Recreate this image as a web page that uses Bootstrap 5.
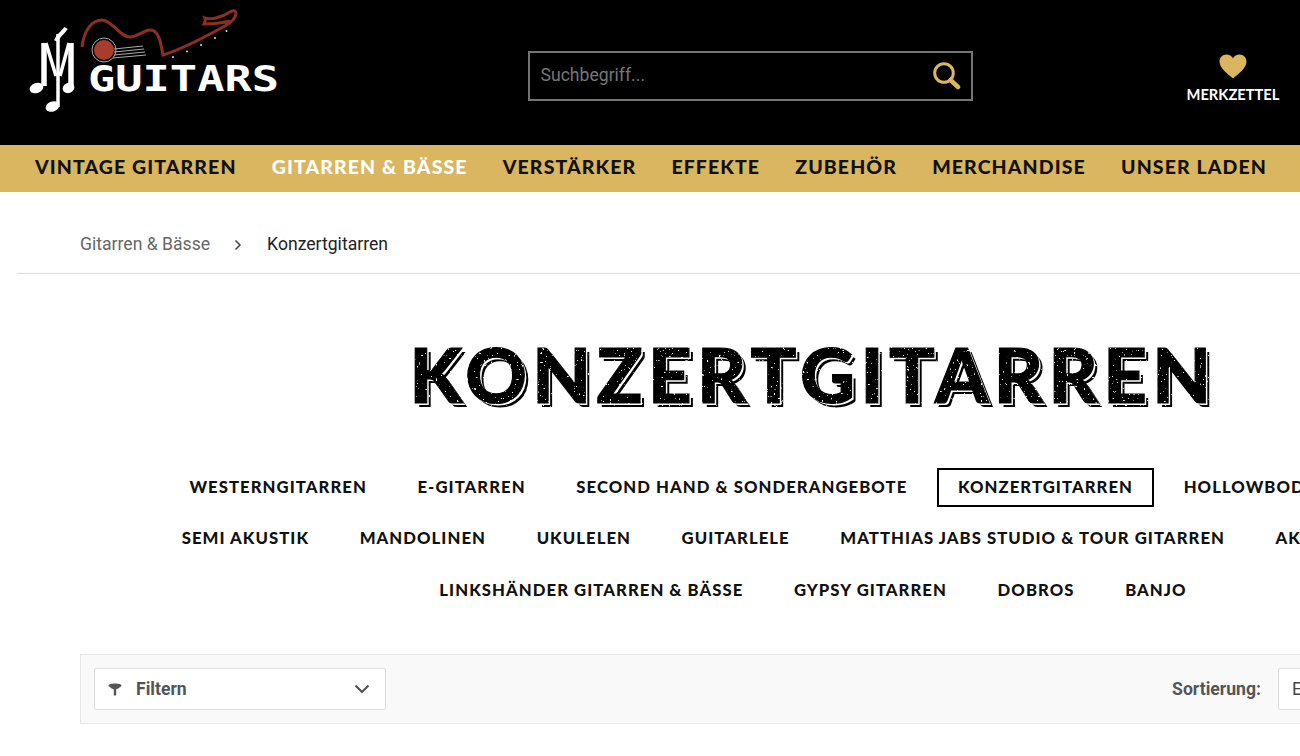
<!DOCTYPE html>
<html lang="de">
<head>
<meta charset="utf-8">
<title>Konzertgitarren</title>
<link rel="stylesheet" href="https://cdn.jsdelivr.net/npm/bootstrap@5.3.0/dist/css/bootstrap.min.css">
<style>
html,body{overflow:hidden;height:756px;width:1300px}
body{font-family:Roboto,sans-serif;background:#fff;color:#222}
.site-top{background:#000;height:145px;padding:0 20px 0 29px}
.logo-svg{display:block;width:252px;height:112px}
.logo-word{font-family:"DejaVu Sans Mono",monospace;font-weight:700;font-size:36px;fill:#fff}
.search-wrap{width:445px;height:50px;border:2.5px solid #747474;margin-left:247px;margin-top:6px;padding:0 10px 0 8.5px}
.search-wrap input{background:transparent;border:0;outline:0;color:#fff;font-size:17.6px;width:100%;font-family:Roboto,sans-serif}
.search-wrap input::placeholder{color:#777;opacity:1}
.wish{width:94px;color:#fff;font-family:Lato,sans-serif;font-weight:700;font-size:14.7px;margin-left:auto;margin-top:14px}
.wish svg{display:block;margin-bottom:4px}
.gold-bar{background:#d9b65f;height:46.500px;padding:0 33px 3px 35px}
.gold-bar a{font-family:Lato,sans-serif;font-weight:900;font-size:19.5px;letter-spacing:1.1px;color:#111;text-decoration:none;white-space:nowrap}
.gold-bar a.is-on{color:#fff}
.wide-page{width:1626px}
.crumbs{margin-left:17px;height:82px;padding:25px 0 0 63px;border-bottom:1px solid #ddd;font-size:17.6px}
.crumbs a{color:#666;text-decoration:none}
.crumbs svg{margin:0 25px 0 24px}
.big-title{font-family:Lato,sans-serif;font-weight:900;font-size:76px;letter-spacing:5.4px;line-height:1;color:#000;margin:62px 0 0;-webkit-text-stroke:1.2px #000;text-shadow:2px 2px 0 #fff,4px 4px 0 #000;filter:url(#worn)}
.cat-rows{margin-top:50px}
.cat-line{height:51.5px}
.cat-line a{font-family:Lato,sans-serif;font-weight:900;font-size:16.7px;letter-spacing:1.05px;color:#111;text-decoration:none;white-space:nowrap;padding:7px 19px;border:2px solid transparent;margin:0 4.3px;line-height:21px}
.cat-line a.is-on{border-color:#000}
.tool-strip{margin:38px 0 0 80px;width:1466px;height:70px;background:#f9f9f9;border:1px solid #e6e6e6;padding:0 13px}
.filter-box{width:292px;height:42px;background:#fff;border:1px solid #ddd;border-radius:2px;padding:0 15px 0 13px;color:#555;font-weight:700;font-size:17.6px}
.filter-box .funnel{margin-right:14px}
.sort-label{color:#555;font-weight:700;font-size:17.6px;margin-right:17px}
.sort-box{width:254px;height:42px;background:#fff;border:1px solid #ddd;border-radius:2px;padding:0 13px;color:#444;font-size:17.6px}
</style>
</head>
<body>
<svg width="0" height="0" class="position-absolute"><defs>
<filter id="worn" x="-2%" y="-10%" width="104%" height="120%">
<feTurbulence type="fractalNoise" baseFrequency="0.42" numOctaves="3" seed="11" result="n"/>
<feColorMatrix in="n" type="matrix" values="0 0 0 0 1  0 0 0 0 1  0 0 0 0 1  0 0 0 12 -8.6" result="spk"/>
<feComposite in="spk" in2="SourceAlpha" operator="in" result="specks"/>
<feMerge><feMergeNode in="SourceGraphic"/><feMergeNode in="specks"/></feMerge>
</filter>
</defs></svg>

<header class="site-top d-flex align-items-center">
  <a href="#" class="d-block align-self-start" aria-label="MJ Guitars">
    <svg class="logo-svg" viewBox="29 0 252 112">
      <g fill="none" stroke="#fff" stroke-linecap="butt">
        <path d="M44 86V43" stroke-width="5.500"/>
        <path d="M46 43L56 76" stroke-width="3.500"/>
        <path d="M71 87V43" stroke-width="5.500"/>
        <path d="M69 43L60 76" stroke-width="3.500"/>
        <path d="M58 107V34" stroke-width="3.500"/>
        <path d="M56 41C58 35 63 33 66 28" stroke-width="4"/>
      </g>
      <g fill="#fff">
        <ellipse cx="36.500" cy="88" rx="7" ry="5" transform="rotate(-20 36.500 88)"/>
        <ellipse cx="52.500" cy="106.500" rx="7" ry="5" transform="rotate(-20 52.500 106.500)"/>
        <ellipse cx="68.500" cy="88" rx="6" ry="5" transform="rotate(-20 68.500 88)"/>
      </g>
      <path d="M82 47C84 30 92 20 102 20C113 21 120 37 130 37C140 36 147 27 154 31C160 35 161 45 163 55C180 50 205 37 225 26C232 22 236 18 236 13C235 9 232 11 228 13C222 17 212 20 205 18C206 20 205 22 204 24C214 24 222 23 230 21" fill="none" stroke="#8c2f22" stroke-width="3"/>
      <circle cx="104" cy="50" r="12" fill="none" stroke="#aaa" stroke-width="1"/>
      <circle cx="104" cy="50" r="10" fill="#a93d2c"/>
      <g stroke="#aaa" stroke-width="1" fill="none">
        <path d="M114 49L143 46"/><path d="M114 52L144 49"/><path d="M114 55L145 52"/><path d="M113 58L146 55"/>
      </g>
      <g fill="#ddd"><circle cx="173" cy="57" r="1"/><circle cx="187" cy="51.500" r="1"/><circle cx="201" cy="45" r="1"/><circle cx="215" cy="38" r="1"/><circle cx="226.500" cy="31" r="1"/></g>
      <text class="logo-word" x="88" y="91" textLength="191" lengthAdjust="spacingAndGlyphs">GUITARS</text>
    </svg>
  </a>
  <form class="search-wrap d-flex align-items-center" onsubmit="return false">
    <input type="text" placeholder="Suchbegriff..." aria-label="Suchbegriff">
    <svg width="30" height="30" viewBox="0 0 30 30" class="flex-shrink-0"><circle cx="13" cy="12" r="9.300" fill="none" stroke="#d9b65f" stroke-width="3"/><path d="M19.500 19L27 26" stroke="#d9b65f" stroke-width="4.500" stroke-linecap="round"/></svg>
  </form>
  <a href="#" class="wish d-flex flex-column align-items-center text-decoration-none">
    <svg width="28" height="25" viewBox="0 0 28 25"><path d="M14 24.500C9 20 .5 14.500.5 7.500.5 3.500 3.500.5 7.500.5 10.300.5 12.800 2 14 4.300 15.200 2 17.700.5 20.500.5 24.500.5 27.500 3.500 27.500 7.500 27.500 14.500 19 20 14 24.500Z" fill="#d9b65f"/></svg>
    MERKZETTEL
  </a>
</header>

<nav class="gold-bar d-flex align-items-center justify-content-between">
  <a href="#">VINTAGE GITARREN</a>
  <a href="#" class="is-on">GITARREN &amp; BÄSSE</a>
  <a href="#">VERSTÄRKER</a>
  <a href="#">EFFEKTE</a>
  <a href="#">ZUBEHÖR</a>
  <a href="#">MERCHANDISE</a>
  <a href="#">UNSER LADEN</a>
</nav>

<main class="wide-page">
  <div class="crumbs d-flex align-items-center">
    <a href="#">Gitarren &amp; Bässe</a>
    <svg width="8" height="12" viewBox="0 0 8 12"><path d="M1.500 1.500L6 6 1.500 10.500" fill="none" stroke="#444" stroke-width="1.500"/></svg>
    <span>Konzertgitarren</span>
  </div>
  <h1 class="big-title text-center">KONZERTGITARREN</h1>
  <div class="cat-rows">
    <div class="cat-line d-flex justify-content-center align-items-center pe-2">
      <a href="#">WESTERNGITARREN</a><a href="#">E-GITARREN</a><a href="#">SECOND HAND &amp; SONDERANGEBOTE</a><a href="#" class="is-on">KONZERTGITARREN</a><a href="#">HOLLOWBODY E-GITARREN</a>
    </div>
    <div class="cat-line d-flex justify-content-center align-items-center">
      <a href="#">SEMI AKUSTIK</a><a href="#">MANDOLINEN</a><a href="#">UKULELEN</a><a href="#">GUITARLELE</a><a href="#">MATTHIAS JABS STUDIO &amp; TOUR GITARREN</a><a href="#">AKUSTIKGITARREN</a>
    </div>
    <div class="cat-line d-flex justify-content-center align-items-center">
      <a href="#">LINKSHÄNDER GITARREN &amp; BÄSSE</a><a href="#">GYPSY GITARREN</a><a href="#">DOBROS</a><a href="#">BANJO</a>
    </div>
  </div>
  <div class="tool-strip d-flex align-items-center justify-content-between">
    <div class="filter-box d-flex align-items-center">
      <svg width="14" height="13" viewBox="0 0 14 13" class="funnel"><path d="M.5 2.500C.5 -.2 13.500 -.2 13.500 2.500C13.500 3.800 10 5.500 8.200 6.500V12.500H5.800V6.500C4 5.500 .5 3.800 .5 2.500Z" fill="#555"/></svg>
      <span>Filtern</span>
      <svg width="16" height="10" viewBox="0 0 16 10" class="ms-auto"><path d="M1.500 1.500L8 8 14.500 1.500" fill="none" stroke="#555" stroke-width="2.200"/></svg>
    </div>
    <div class="d-flex align-items-center">
      <span class="sort-label">Sortierung:</span>
      <div class="sort-box d-flex align-items-center">Empfehlung</div>
    </div>
  </div>
</main>
<script src="https://cdn.jsdelivr.net/npm/bootstrap@5.3.0/dist/js/bootstrap.bundle.min.js"></script>
</body>
</html>
